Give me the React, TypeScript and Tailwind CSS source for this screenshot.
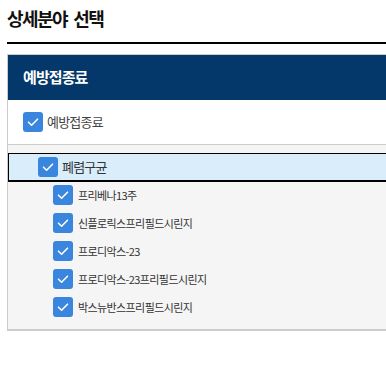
import React from "react";

const font = { fontFamily: '"Noto Sans CJK KR", "Noto Sans", sans-serif' };

function Check() {
  return (
    <span className="flex h-[20px] w-[20px] shrink-0 items-center justify-center rounded-[3px] bg-[#3a85de]">
      <svg width="20" height="20" viewBox="0 0 20 20" fill="none">
        <path d="M5.5 10.2 L8.6 13.2 L14.5 7.2" stroke="white" strokeWidth="1.6" strokeLinecap="round" strokeLinejoin="round" />
      </svg>
    </span>
  );
}

const children = [
  "프리베나13주",
  "신플로릭스프리필드시린지",
  "프로디악스-23",
  "프로디악스-23프리필드시린지",
  "박스뉴반스프리필드시린지",
];

export default function App() {
  return (
    <div className="h-[370px] w-[386px] overflow-hidden bg-white" style={font}>
      <div className="flex h-[42px] items-start pl-[7px] pt-[6px]">
        <h1 className="text-[18px] font-bold leading-[24px] tracking-[-1.6px] [word-spacing:4px] text-[#111]">상세분야 선택</h1>
      </div>
      <div className="ml-[7px] h-[2px] bg-black" />
      <div className="ml-[7px] mt-[10px] w-[440px] border border-b-2 border-[#cccccc]">
        <div className="flex h-[45px] items-center bg-[#04386a] pl-[15px]">
          <span className="text-[15px] font-bold tracking-[-0.9px] text-white">예방접종료</span>
        </div>
        <div className="flex h-[45px] items-center gap-[4px] border-b border-[#cccccc] bg-white pl-[15px]">
          <Check />
          <span className="text-[13px] tracking-[-0.8px] text-[#444]">예방접종료</span>
        </div>
        <div className="bg-[#f5f5f5] pt-[8px] pb-[12px]">
          <div className="flex h-[29px] items-center gap-[4px] border-t border-l border-b-2 border-black bg-[#d9edfb] pl-[29px]">
            <Check />
            <span className="text-[13px] tracking-[-0.8px] text-[#333]">폐렴구균</span>
          </div>
          <div className="flex flex-col gap-[8px] pl-[45px] pt-[3px]">
            {children.map((c) => (
              <div key={c} className="flex h-[20px] items-center gap-[5px]">
                <Check />
                <span className="text-[11px] tracking-[-0.6px] text-[#333]">{c}</span>
              </div>
            ))}
          </div>
        </div>
      </div>
    </div>
  );
}
